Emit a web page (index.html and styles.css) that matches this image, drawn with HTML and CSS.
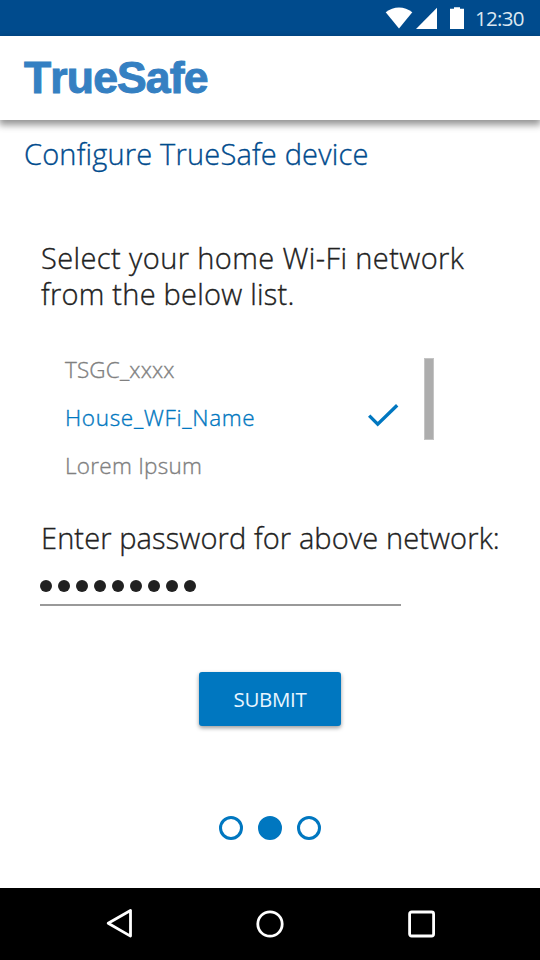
FILE: index.html
```html
<!DOCTYPE html>
<html lang="en">
<head>
<meta charset="utf-8">
<title>TrueSafe</title>
<link rel="stylesheet" href="styles.css">
</head>
<body>
<div class="screen">
  <div class="status">
    <svg class="status-icons" width="80" height="36" viewBox="0 0 80 36" fill="#fff">
      <path d="M.7 12.2C8.5 5.8 19.5 5.8 27.3 12.2L14 28.5Z"/>
      <path d="M31 29 52 7.7V29Z"/>
      <path d="M65 8.8h4V7.2h6v1.6h4V29H65Z"/>
    </svg>
    <span class="clock">12:30</span>
  </div>
  <header class="appbar"><div class="logo">TrueSafe</div></header>
  <main class="content">
    <h1 class="title">Configure TrueSafe device</h1>
    <p class="prompt"><span class="line-a">Select your home Wi-Fi network</span><br><span class="line-b">from the below list.</span></p>
    <div class="picker">
      <ul class="networks">
        <li class="network"><span class="name-a">TSGC_xxxx</span></li>
        <li class="network selected"><span class="name-b">House_WFi_Name</span>
          <svg class="check" width="32" height="24" viewBox="0 0 32 24" fill="none" stroke="#0077c0" stroke-width="3.4"><path d="M1.2 12.6 9.7 21.1 29.2 2.2"/></svg>
        </li>
        <li class="network"><span class="name-c">Lorem Ipsum</span></li>
      </ul>
      <div class="scrollbar"></div>
    </div>
    <label class="password-label">Enter password for above network:</label>
    <div class="password"><i class="dot"></i><i class="dot"></i><i class="dot"></i><i class="dot"></i><i class="dot"></i><i class="dot"></i><i class="dot"></i><i class="dot"></i><i class="dot"></i></div>
    <button class="submit">SUBMIT</button>
    <div class="steps"><i class="step"></i><i class="step current"></i><i class="step"></i></div>
  </main>
  <nav class="navbar">
    <svg width="30" height="32" viewBox="0 0 30 32"><path d="M4.2 15.3 26.5 2.5V28.1Z"/></svg>
    <svg width="30" height="32" viewBox="0 0 30 32"><circle cx="15" cy="16" r="12.2"/></svg>
    <svg width="30" height="32" viewBox="0 0 30 32"><rect x="3.6" y="4" width="24" height="24" rx="2"/></svg>
  </nav>
</div>
</body>
</html>
```
FILE: styles.css
```css
* { box-sizing: border-box; }
body { margin: 0; background: #fff; font-family: "Open Sans", "Noto Sans", sans-serif; }
.screen { width: 540px; height: 960px; display: flex; flex-direction: column; overflow: hidden; }
.status { height: 36px; background: #004b8d; display: flex; align-items: center; padding-left: 385px; flex: none; }
.clock { margin-left: 10px; color: #dce7f0; font-size: 20.5px; line-height: 36px; letter-spacing: -0.7px; }
.appbar { height: 84px; flex: none; padding: 16px 24px; background: #fff; box-shadow: 0 4px 7px 1px rgba(0,0,0,.42); }
.logo { color: #3580c2; font: bold 44.5px/52px "Liberation Sans", Arial, sans-serif; letter-spacing: -.85px; font-kerning: none; -webkit-text-stroke: 1px #3580c2; }
.content { flex: 1; display: flex; flex-direction: column; white-space: nowrap; align-items: flex-start; font-weight: 300; -webkit-text-stroke: .35px currentColor; }
.title { margin: 16px 0 0 24px; color: #004b8d; font-size: 29px; font-weight: 300; line-height: 36px; letter-spacing: .18px; -webkit-text-stroke: .35px #004b8d; }
.prompt { margin: 68px 0 0 41px; color: #212121; font-size: 29px; line-height: 36px; -webkit-text-stroke-color: #212121; }
.line-a { letter-spacing: .4px; }
.line-b { letter-spacing: .24px; }
.picker { display: flex; margin: 34px 0 0 65px; }
.networks { list-style: none; margin: 0; padding: 0; width: 359px; }
.network { height: 48px; line-height: 48px; font-size: 22.5px; color: #808080; display: flex; justify-content: space-between; padding-right: 24px; -webkit-text-stroke-color: #808080; }
.name-a { letter-spacing: .15px; }
.name-b { letter-spacing: .68px; }
.name-c { letter-spacing: .27px; }
.selected { color: #0077c0; -webkit-text-stroke-color: #0077c0; }
.check { margin-top: 9px; }
.scrollbar { width: 10px; height: 82px; margin-top: 12px; background: #adadad; border: 1px solid #c4c4c4; }
.password-label { margin: 30px 0 0 41px; color: #212121; font-size: 29px; line-height: 36px; letter-spacing: .11px; -webkit-text-stroke-color: #212121; }
.password { margin-left: 40px; width: 361px; height: 50px; padding: 24px 0 0 .4px; display: flex; gap: 6px; border-bottom: 2px solid #999; }
.dot { width: 12px; height: 12px; border-radius: 50%; background: #212121; }
.submit { margin: 66px 0 0 199px; width: 142px; height: 54px; padding: 1px 0 0; border: 0; border-radius: 3px; background: #0077c0; color: #e8f5ff; font: 20.5px/53px "Open Sans", sans-serif; letter-spacing: -.3px; -webkit-text-stroke: 0; box-shadow: 0 2px 4px rgba(0,0,0,.4); }
.steps { margin: 90px 0 0 219px; display: flex; gap: 15px; }
.step { width: 24px; height: 24px; border: 3px solid #0077c0; border-radius: 50%; }
.current { background: #0077c0; }
.navbar { height: 72px; flex: none; background: #000; display: flex; justify-content: space-between; align-items: center; padding: 0 104px; }
.navbar svg { fill: none; stroke: #fff; stroke-width: 2.8; stroke-linejoin: round; }
```
